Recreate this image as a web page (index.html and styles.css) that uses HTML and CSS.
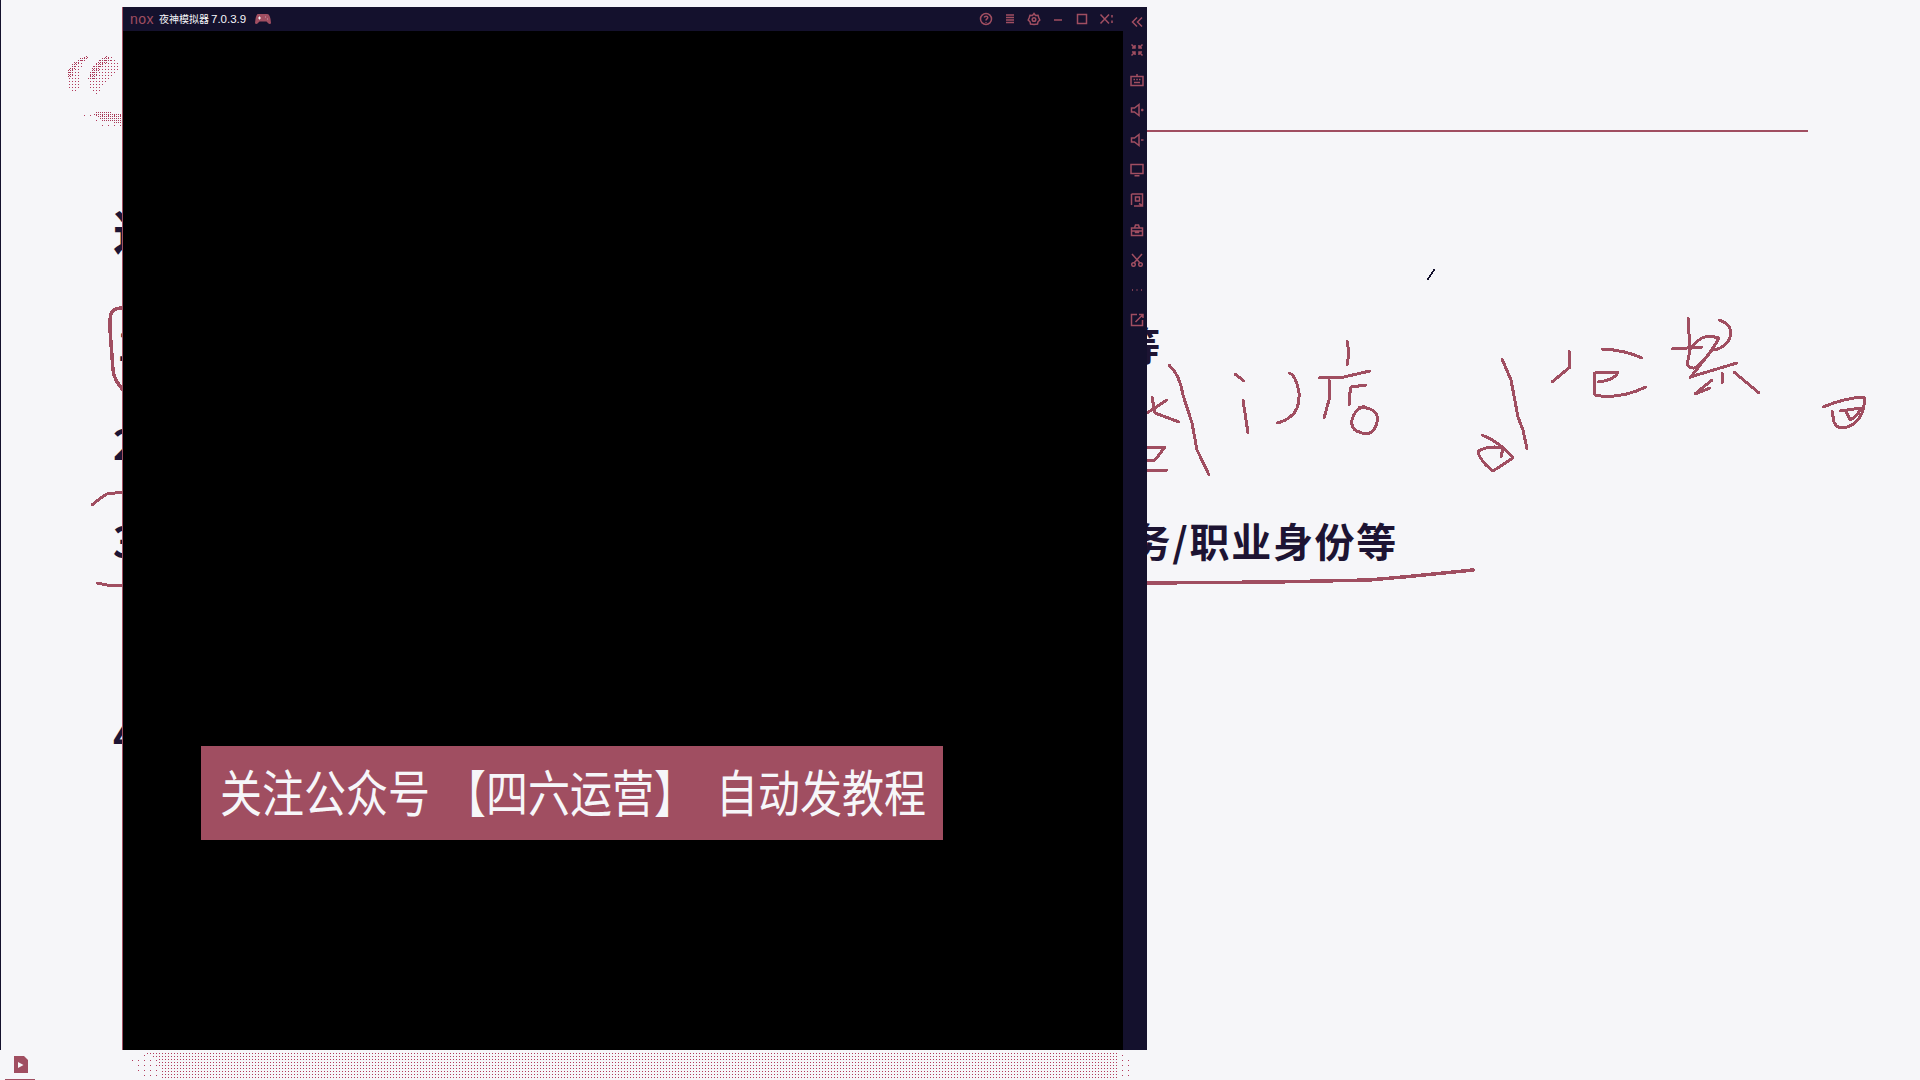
FILE: index.html
```html
<!DOCTYPE html>
<html lang="zh-CN">
<head>
<meta charset="utf-8">
<title>夜神模拟器</title>
<link rel="stylesheet" href="styles.css">
</head>
<body>
<div class="stage">
  <div class="edge-bar"></div>

  <main class="slide">
    <div class="row row-title">这</div>
    <div class="row row-one"><span>1</span><span>等</span></div>
    <div class="row row-two"><span>2</span></div>
    <div class="row row-three"><span>3</span><span>业务/职业身份等</span></div>
    <div class="row row-four"><span>4</span></div>
  </main>

  <svg class="ink" viewBox="0 0 1920 1080" width="1920" height="1080" aria-hidden="true">
    <defs>
      <pattern id="dots" width="3" height="3" patternUnits="userSpaceOnUse"><rect width="1" height="1" fill="#b23a5c"/></pattern>
      <pattern id="dots-dense" width="2" height="2" patternUnits="userSpaceOnUse"><rect width="1" height="1" fill="#a83a58"/></pattern>
      <pattern id="dots-sparse" width="6" height="5" patternUnits="userSpaceOnUse"><rect width="1" height="1" fill="#b23a5c"/></pattern>
    </defs>
    <g class="halftone">
      <path fill="url(#dots)" d="M87 56C76 58 66 68 67 78C67 85 70 90 73 94C78 92 80 88 79 82C78 74 82 64 88 58Z"/>
      <path fill="url(#dots-dense)" d="M87 56C76 58 66 68 67 78L72 78C72 70 78 62 88 58Z"/>
      <path fill="url(#dots)" d="M107 56C96 60 88 70 88 80C88 86 92 92 97 94C100 90 104 84 110 80C114 76 118 72 120 66C118 60 112 56 107 56Z"/>
      <path fill="url(#dots-dense)" d="M107 56C96 60 88 70 88 80L95 80C96 72 102 64 112 60Z"/>
      <path fill="url(#dots-sparse)" d="M78 112L122 115V128L100 126Z"/>
      <path fill="url(#dots-dense)" d="M92 113L100 112L122 113V123L105 122Z"/>
      <path fill="url(#dots)" d="M146 1053H1118V1080H163L158 1060Z"/>
      <path fill="url(#dots-sparse)" d="M131 1060L146 1053L158 1060L163 1080H141Z"/>
      <path fill="url(#dots-sparse)" d="M1118 1053L1128 1056L1132 1075L1120 1080H1118Z"/>
    </g>
    <g class="pen">
      <path class="thin" d="M1147 131H1807"/>
      <path class="heavy" d="M122 308Q113 308 111 314Q109 320 111 343L113 370Q114 380 123 390"/>
      <path d="M123 492L107 494Q100 498 92 505"/>
      <path d="M97 583L107 585L123 585"/>
      <path class="heavy" d="M1147 583L1274 582L1369 580L1414 576L1473 570"/>
      <path d="M1169 365Q1180 375 1183 395L1192 423L1197 450Q1203 462 1209 475"/>
      <path d="M1147 413L1167 400M1152 397L1155 413L1179 422M1147 447H1165L1155 460H1147M1147 470H1167"/>
      <path d="M1235 374L1244 381M1243 400L1248 433M1289 373Q1296 375 1299 393Q1300 410 1290 417Q1285 421 1277 423"/>
      <path d="M1347 341L1349 353L1347 365M1319 378L1344 377L1370 371M1329 380V400L1324 418M1366 385L1351 387Q1349 395 1349 405"/>
      <path d="M1364 406Q1354 410 1352 420Q1350 430 1362 433Q1374 436 1377 422Q1380 408 1359 407"/>
      <path d="M1502 359L1511 380L1518 417L1523 430L1527 449"/>
      <path d="M1482 435Q1500 442 1513 458L1493 471L1486 465Q1478 456 1478 451Q1490 445 1503 448L1501 457"/>
      <path d="M1569 351L1570 367L1552 382M1602 349Q1625 350 1642 358M1594 373L1595 395Q1618 400 1646 387M1598 382Q1615 380 1618 372L1595 373"/>
      <path d="M1688 318L1690 350L1687 365Q1692 370 1697 367Q1710 355 1719 338Q1708 335 1702 338Q1695 342 1690 350M1672 349L1702 347M1719 320Q1735 325 1729 340Q1722 350 1712 350L1690 378M1690 377L1737 363M1734 372L1759 393M1722 373V383M1712 380L1695 394L1710 388"/>
      <path d="M1823 407Q1845 398 1864 397Q1866 415 1852 425Q1838 432 1834 422L1832 411M1846 411L1850 420Q1858 416 1861 408L1840 411"/>
      <path class="hair" d="M1434 270L1428 279"/>
    </g>
  </svg>

  <section class="window">
    <div class="window-main">
      <header class="titlebar">
        <div class="brand">
          <span class="brand-logo">nox</span>
          <span class="brand-name">夜神模拟器</span>
          <span class="brand-version">7.0.3.9</span>
          <svg class="brand-pad" viewBox="0 0 18 12"><path d="M4 1H13C15 1 16 3 16.500 6L17 10C17 11 15 11.500 14 10L12.500 8.500H5.500L4 10C3 11.500 1 11 1 10L1.500 6C2 3 3 1 4 1Z"/><path class="cut" d="M4 5H7M5.500 3.500V6.500M11 4H11.500M13 6H13.500"/></svg>
        </div>
        <nav class="controls">
          <svg class="ico" viewBox="0 0 14 14"><circle cx="7" cy="7" r="5.500"/><path d="M5.200 5.500C5.500 3.800 8.800 3.800 8.800 5.500C8.800 7 7 6.800 7 8.500M7 10V10.800"/></svg>
          <svg class="ico" viewBox="0 0 14 14"><path d="M3 3H11M3 5.500H11M3 8H11M3 10.500H11"/></svg>
          <svg class="ico" viewBox="0 0 14 14"><path d="M7 1.500L8.500 3.500L11 3.300L11.800 5.800L12.800 8L11 9.800L10.500 12L7 12.500L3.500 12L3 9.800L1.200 8L2.200 5.800L3 3.300L5.500 3.500Z"/><circle cx="7" cy="7.500" r="1.800"/></svg>
          <svg class="ico" viewBox="0 0 14 14"><path d="M3 8H11"/></svg>
          <svg class="ico" viewBox="0 0 14 14"><path d="M2.500 2.500H11.500V11.500H2.500Z"/></svg>
          <svg class="ico" viewBox="0 0 14 14"><path d="M1.500 2.500L10 11.500M10 2.500L1.500 11.500M13 3V5.500M13 8.500V11"/></svg>
        </nav>
      </header>
      <div class="screen">
        <div class="banner">
          <span>关注公众号</span>
          <span class="bracketed">【四六运营】</span>
          <span>自动发教程</span>
        </div>
      </div>
    </div>
    <aside class="sidebar">
      <svg class="ico first" viewBox="0 0 14 14"><path d="M7 2.500L2.500 7L7 11.500M12 2.500L7.500 7L12 11.500"/></svg>
      <svg class="ico" viewBox="0 0 14 14"><path d="M1.500 1.500L5 5M5 2V5H2M12.500 1.500L9 5M9 2V5H12M1.500 12.500L5 9M5 12V9H2M12.500 12.500L9 9M9 12V9H12"/></svg>
      <svg class="ico" viewBox="0 0 14 14"><path d="M1 3.500H13V12.500H1ZM7 3.500V1M3.500 6.500H5M6.300 6.500H7.800M9 6.500H10.500M4 9.500H10"/></svg>
      <svg class="ico" viewBox="0 0 14 14"><path d="M1.500 5H4.500L9 1.500V12.500L4.500 9H1.500ZM11 7H13.500M12.200 5.800V8.200"/></svg>
      <svg class="ico" viewBox="0 0 14 14"><path d="M1.500 5H4.500L9 1.500V12.500L4.500 9H1.500ZM11 7H13.500"/></svg>
      <svg class="ico" viewBox="0 0 14 14"><path d="M1 1.500H13V10.500H1ZM4.500 12.800H9.500"/></svg>
      <svg class="ico" viewBox="0 0 14 14"><path d="M1.500 1H12.500V13H4M1.500 1V12M5.500 4H9.500V8H5.500ZM9 10.500L13 13"/></svg>
      <svg class="ico" viewBox="0 0 14 14"><path d="M1.500 5H12.500V12.500H1.500ZM4.500 5L5.500 2H8.500L9.500 5M1.500 8H12.500M5.500 8V9.500H8.500V8"/></svg>
      <svg class="ico" viewBox="0 0 14 14"><path d="M2 1L10 10M12 1L4 10"/><circle cx="3.500" cy="11.500" r="1.800"/><circle cx="10.500" cy="11.500" r="1.800"/></svg>
      <svg class="ico" viewBox="0 0 14 14"><path d="M2 7H3M6.500 7H7.500M11 7H12"/></svg>
      <svg class="ico" viewBox="0 0 14 14"><path d="M7 1.500H1.500V12.500H12.500V7M5.500 9L12.500 2M9 1.500H13V5"/></svg>
    </aside>
  </section>

  <div class="doc-icon">
    <svg viewBox="0 0 14 17" width="14" height="17"><path class="doc-sheet" d="M0 0H10L14 4V17H0Z"/><path class="doc-play" d="M4 6L9.500 9L4 12Z"/></svg>
  </div>
  <div class="doc-rule"></div>
</div>
</body>
</html>
```

FILE: styles.css
```css
html, body {
  margin: 0;
  padding: 0;
  background: #f6f6f9;
}

.stage {
  position: relative;
  width: 1920px;
  height: 1080px;
  overflow: hidden;
  background: #f6f6f9;
  font-family: "Noto Sans CJK SC", "Noto Sans", sans-serif;
}

.edge-bar {
  position: absolute;
  left: 0;
  top: 0;
  width: 1px;
  height: 1050px;
  background: #14112d;
}

/* slide text, mostly hidden behind the emulator window */
.slide {
  padding: 204px 0 0 113px;
  color: #1d1433;
  font-weight: 700;
  font-size: 40px;
  line-height: 50px;
}

.row {
  display: flex;
  justify-content: space-between;
  height: 50px;
  white-space: nowrap;
}

.row-title { font-size: 48px; }
.row-one { margin-top: 65px; padding: 0 758px 0 4px; letter-spacing: 1.700px; }
.row-two { margin-top: 49px; }
.row-three { margin-top: 47px; padding-right: 522px; letter-spacing: 1.700px; }
.row-four { margin-top: 145px; }

/* free-hand annotation layer */
.ink {
  position: absolute;
  left: 0;
  top: 0;
}

.halftone path { shape-rendering: crispEdges; }

.pen path {
  fill: none;
  stroke: #a04e61;
  stroke-width: 3;
  stroke-linecap: round;
  stroke-linejoin: round;
  shape-rendering: crispEdges;
}

.pen .heavy { stroke-width: 3.500px; }
.pen .thin { stroke-width: 2; }
.pen .hair { stroke: #14112d; stroke-width: 1.500px; }

/* emulator window */
.window {
  position: absolute;
  left: 122px;
  top: 7px;
  width: 1024px;
  height: 1043px;
  display: flex;
  background: #14112d;
  border-left: 1px solid #a04e61;
}

.window-main {
  flex: 1;
  display: flex;
  flex-direction: column;
  min-width: 0;
}

.titlebar {
  height: 24px;
  flex: none;
  display: flex;
  align-items: center;
  justify-content: space-between;
  padding: 0 10px 0 7px;
}

.brand {
  display: flex;
  align-items: center;
  color: #f6f6f9;
}

.brand-logo {
  width: 29px;
  font-family: "Liberation Sans", sans-serif;
  font-size: 14px;
  line-height: 14px;
  color: #a04e61;
  letter-spacing: 0.500px;
}

.brand-name {
  font-size: 10px;
  line-height: 14px;
}

.brand-version {
  margin-left: 2px;
  font-family: "Liberation Sans", sans-serif;
  font-size: 11.500px;
  line-height: 14px;
}

.brand-pad {
  width: 18px;
  height: 12px;
  margin-left: 8px;
  fill: #a04e61;
}

.brand-pad .cut {
  fill: none;
  stroke: #f6f6f9;
  stroke-width: 1;
}

.controls {
  display: flex;
  gap: 10px;
}

.ico {
  width: 14px;
  height: 14px;
  flex: none;
  fill: none;
  stroke: #a04e61;
  stroke-width: 1.500px;
}

.screen {
  position: relative;
  flex: 1;
  background: #000;
}

.banner {
  position: absolute;
  left: 78px;
  top: 715px;
  width: 742px;
  height: 94px;
  box-sizing: border-box;
  display: flex;
  align-items: center;
  padding-left: 19px;
  background: #a04e61;
  color: #f6f6f9;
  font-size: 42px;
  line-height: 50px;
  white-space: nowrap;
}

.banner span {
  display: block;
  transform: translateY(-3px) scaleY(1.200);
}

.bracketed { margin: 0 20px 0 14px; }

.sidebar {
  width: 24px;
  flex: none;
  box-sizing: border-box;
  display: flex;
  flex-direction: column;
  padding-left: 7px;
  gap: 16px;
}

.sidebar .first { margin-top: 8px; margin-bottom: -2.500px; }

/* taskbar bits at the bottom-left */
.doc-icon {
  position: absolute;
  left: 14px;
  top: 1056px;
  width: 14px;
  height: 17px;
}

.doc-icon svg { display: block; }
.doc-sheet { fill: #a04e61; }
.doc-play { fill: #f6f6f9; }

.doc-rule {
  position: absolute;
  left: 5px;
  top: 1079px;
  width: 30px;
  height: 1px;
  background: #a04e61;
}
```
